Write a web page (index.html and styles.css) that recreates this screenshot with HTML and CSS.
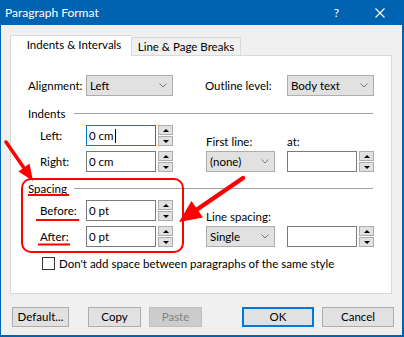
FILE: index.html
```html
<!doctype html>
<html>
  <head>
    <meta charset="UTF-8" />
    <meta name="viewport" content="width=device-width, initial-scale=1.0" />
    <title>Paragraph Format</title>
    <link rel="stylesheet" href="styles.css">
  </head>
  <body>
    <div class="window">
      <div class="titlebar">
        <span class="title">Paragraph Format</span>
        <span class="help">?</span>
        <svg class="close" width="10" height="10" viewBox="0 0 10 10">
          <path d="M0.5 0.5L9.5 9.5M9.5 0.5L0.5 9.5" stroke="#fff" stroke-width="1.1" fill="none" />
        </svg>
      </div>

      <div class="client">
        <div class="tabs">
          <div class="tab active">Indents &amp; Intervals</div>
          <div class="tab">Line &amp; Page Breaks</div>
        </div>

        <div class="panel">
          <div class="top-row">
            <span class="label w-align">Alignment:</span>
            <div class="select wide">
              <span>Left</span>
              <svg class="chev" width="8" height="5" viewBox="0 0 8 5"><path d="M0.5 0.5L4 4L7.5 0.5" stroke="#777" fill="none" /></svg>
            </div>
            <span class="label w-outline">Outline level:</span>
            <div class="select wide">
              <span>Body text</span>
              <svg class="chev" width="8" height="5" viewBox="0 0 8 5"><path d="M0.5 0.5L4 4L7.5 0.5" stroke="#777" fill="none" /></svg>
            </div>
          </div>

          <!-- Indents -->
          <div class="group-head"><span class="group-name">Indents</span><div class="rule"></div></div>
          <div class="fields">
            <div class="col-left">
              <div class="field">
                <span class="label w-field">Left:</span>
                <div class="input focus">0 cm<span class="caret"></span></div>
                <div class="spin"><span class="up"></span><span class="down"></span></div>
              </div>
              <div class="field">
                <span class="label w-field">Right:</span>
                <div class="input">0 cm</div>
                <div class="spin"><span class="up"></span><span class="down"></span></div>
              </div>
            </div>
            <div class="col-right">
              <div class="stack narrow">
                <span class="label">First line:</span>
                <div class="select narrow">
                  <span>(none)</span>
                  <svg class="chev" width="8" height="5" viewBox="0 0 8 5"><path d="M0.5 0.5L4 4L7.5 0.5" stroke="#777" fill="none" /></svg>
                </div>
              </div>
              <div class="stack">
                <span class="label">at:</span>
                <div class="field">
                  <div class="input"></div>
                  <div class="spin"><span class="up"></span><span class="down"></span></div>
                </div>
              </div>
            </div>
          </div>

          <!-- Spacing -->
          <div class="group-head"><span class="group-name">Spacing</span><div class="rule"></div></div>
          <div class="fields">
            <div class="col-left">
              <div class="field">
                <span class="label w-field">Before:</span>
                <div class="input">0 pt</div>
                <div class="spin"><span class="up"></span><span class="down"></span></div>
              </div>
              <div class="field">
                <span class="label w-field">After:</span>
                <div class="input">0 pt</div>
                <div class="spin"><span class="up"></span><span class="down"></span></div>
              </div>
            </div>
            <div class="col-right">
              <div class="stack narrow">
                <span class="label">Line spacing:</span>
                <div class="select narrow">
                  <span>Single</span>
                  <svg class="chev" width="8" height="5" viewBox="0 0 8 5"><path d="M0.5 0.5L4 4L7.5 0.5" stroke="#777" fill="none" /></svg>
                </div>
              </div>
              <div class="stack">
                <div class="field">
                  <div class="input"></div>
                  <div class="spin"><span class="up"></span><span class="down"></span></div>
                </div>
              </div>
            </div>
          </div>

          <div class="check"><span class="box"></span><span>Don't add space between paragraphs of the same style</span></div>
        </div>

        <div class="buttons">
          <div class="btn b-default">Default...</div>
          <div class="btn b-copy">Copy</div>
          <div class="btn b-paste disabled">Paste</div>
          <div class="btn b-ok primary">OK</div>
          <div class="btn b-cancel">Cancel</div>
        </div>
      </div>

      <!-- red annotations drawn over the dialog -->
      <svg class="marks" width="404" height="337" viewBox="0 0 404 337">
        <g stroke="#f00" fill="none">
          <rect x="22" y="179" width="161" height="73" rx="9" stroke-width="2" />
          <path d="M28 195H69M36 220H79M38 244.5H70" stroke-width="2" />
          <path d="M6 142L24 168" stroke-width="3.5" stroke-linecap="round" />
          <path d="M243 178L197 209.5" stroke-width="4.5" stroke-linecap="round" />
        </g>
        <g fill="#f00">
          <polygon points="33,181 18.5,171.5 29.5,163.5" />
          <polygon points="179,222 191.5,201 203,217.5" />
        </g>
      </svg>
    </div>
  </body>
</html>
```

FILE: styles.css
```css
body {
  margin: 0;
  font-family: "Segoe UI", Lato, sans-serif;
  font-size: 11.5px;
  color: #000;
}

.window {
  position: relative;
  width: 404px;
  height: 337px;
  box-sizing: border-box;
  background: #f0f0f0;
  border-style: solid;
  border-color: #0063b1;
  border-width: 0 2px 2px 1px;
}

/* --- title bar --- */
.titlebar {
  height: 25px;
  display: flex;
  align-items: center;
  background: #0063b1;
  color: #fff;
  font-size: 12px;
}

.title {
  flex: 1;
  padding-left: 4px;
}

.help {
  margin-right: 36px;
}

.close {
  margin-right: 17px;
}

/* --- client area --- */
.client {
  padding: 10px 8px 0 9px;
}

.tabs {
  display: flex;
  align-items: flex-end;
  height: 20px;
}

.tab {
  box-sizing: border-box;
  height: 18px;
  width: 110px;
  padding-top: 1px;
  line-height: 16px;
  text-align: center;
  border: 1px solid #d9d9d9;
  border-bottom: none;
  white-space: nowrap;
}

.tab.active {
  position: relative;
  z-index: 1;
  width: 121px;
  height: 21px;
  margin-bottom: -1px;
  padding-left: 6px;
  background: #fff;
  border-right: none;
}

.panel {
  box-sizing: border-box;
  height: 239px;
  margin-right: 2px;
  padding: 19px 17px 0;
  background: #fff;
  border: 1px solid #d9d9d9;
}

.label {
  line-height: 16px;
  white-space: nowrap;
}

.w-align {
  width: 58px;
}

.w-outline {
  width: 82px;
  margin-left: 32px;
}

.w-field {
  width: 46px;
}

.top-row {
  display: flex;
  align-items: center;
}

/* combo boxes */
.select {
  box-sizing: border-box;
  height: 21px;
  display: flex;
  align-items: center;
  justify-content: space-between;
  padding: 0 5px 0 3px;
  background: #e1e1e1;
  border: 1px solid #adadad;
}

.select.wide {
  width: 87px;
}

.select.narrow {
  width: 69px;
}

/* group headers with the etched rule */
.group-head {
  display: flex;
  align-items: center;
  height: 16px;
  margin-top: 9px;
}

.group-name {
  width: 46px;
}

.rule {
  flex: 1;
  height: 1px;
  margin-right: 1px;
  background: #a0a0a0;
}

.group-head + .fields {
  margin-top: 4px;
}

.fields + .group-head {
  margin-top: 8px;
}

.fields {
  display: flex;
  padding-left: 12px;
}

.col-left {
  display: flex;
  flex-direction: column;
  gap: 5px;
}

.col-right {
  display: flex;
  align-items: flex-end;
  gap: 12px;
  margin-left: 33px;
}

.stack {
  display: flex;
  flex-direction: column;
}

.stack.narrow {
  width: 69px;
}

.stack .label {
  margin-bottom: 1px;
}

.field {
  display: flex;
  align-items: center;
}

/* text boxes */
.input {
  box-sizing: border-box;
  width: 70px;
  height: 21px;
  padding-left: 2px;
  line-height: 19px;
  background: #fff;
  border: 1px solid #7a7a7a;
}

.input.focus {
  border-color: #0078d7;
}

.caret {
  display: inline-block;
  width: 1px;
  height: 14px;
  margin-left: 1px;
  vertical-align: -3px;
  background: #000;
}

/* up / down buttons */
.spin {
  width: 15px;
  height: 21px;
  margin-left: 2px;
  display: flex;
  flex-direction: column;
  gap: 1px;
}

.spin span {
  box-sizing: border-box;
  height: 10px;
  display: flex;
  align-items: center;
  justify-content: center;
  background: #e1e1e1;
  border: 1px solid #adadad;
}

.spin .up::before,
.spin .down::before {
  content: "";
  width: 0;
  height: 0;
  border-left: 3px solid transparent;
  border-right: 3px solid transparent;
}

.spin .up::before {
  border-bottom: 3px solid #000;
}

.spin .down::before {
  border-top: 3px solid #000;
}

/* checkbox */
.check {
  display: flex;
  align-items: center;
  gap: 4px;
  margin-top: 10px;
  padding-left: 14px;
  white-space: nowrap;
}

.check .box {
  box-sizing: border-box;
  width: 13px;
  height: 13px;
  background: #fff;
  border: 1px solid #333;
}

/* bottom buttons */
.buttons {
  display: flex;
  margin-top: 13px;
  padding-left: 2px;
}

.btn {
  box-sizing: border-box;
  height: 20px;
  line-height: 18px;
  text-align: center;
  background: #e1e1e1;
  border: 1px solid #adadad;
}

.b-default {
  width: 57px;
}

.b-copy {
  width: 53px;
  margin-left: 19px;
}

.b-paste {
  width: 53px;
  margin-left: 8px;
}

.b-ok {
  width: 72px;
  margin-left: auto;
}

.b-cancel {
  width: 72px;
  margin-left: 8px;
}

.btn.disabled {
  color: #838383;
  background: #cccccc;
  border-color: #bfbfbf;
}

.btn.primary {
  line-height: 16px;
  border: 2px solid #0078d7;
}

.marks {
  position: absolute;
  left: -1px;
  top: 0;
  pointer-events: none;
}
```
